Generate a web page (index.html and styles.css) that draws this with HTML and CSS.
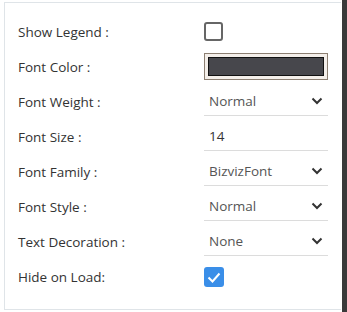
FILE: index.html
```html
<!DOCTYPE html>
<html lang="en">

<head>
    <meta charset="UTF-8">
    <meta name="viewport" content="width=device-width, initial-scale=1.0">
    <title>Legend Properties</title>
    <link rel="stylesheet" href="styles.css">
</head>

<body>
    <div class="page">
        <div class="panel">
            <div class="row">
                <span class="label">Show Legend :</span>
                <span class="checkbox"></span>
            </div>
            <div class="row">
                <span class="label">Font Color :</span>
                <span class="color-box"><span class="swatch"></span></span>
            </div>
            <div class="row">
                <span class="label">Font Weight :</span>
                <div class="select"><span>Normal</span><svg class="chevron" width="12" height="8" viewBox="0 0 12 8"><path d="M1.5 1.5 6 6l4.5-4.5" fill="none" stroke="#333" stroke-width="2"/></svg></div>
            </div>
            <div class="row">
                <span class="label">Font Size :</span>
                <div class="select input">14</div>
            </div>
            <div class="row">
                <span class="label">Font Family :</span>
                <div class="select"><span>BizvizFont</span><svg class="chevron" width="12" height="8" viewBox="0 0 12 8"><path d="M1.5 1.5 6 6l4.5-4.5" fill="none" stroke="#333" stroke-width="2"/></svg></div>
            </div>
            <div class="row">
                <span class="label">Font Style :</span>
                <div class="select"><span>Normal</span><svg class="chevron" width="12" height="8" viewBox="0 0 12 8"><path d="M1.5 1.5 6 6l4.5-4.5" fill="none" stroke="#333" stroke-width="2"/></svg></div>
            </div>
            <div class="row">
                <span class="label">Text Decoration :</span>
                <div class="select"><span>None</span><svg class="chevron" width="12" height="8" viewBox="0 0 12 8"><path d="M1.5 1.5 6 6l4.5-4.5" fill="none" stroke="#333" stroke-width="2"/></svg></div>
            </div>
            <div class="row">
                <span class="label">Hide on Load:</span>
                <span class="checkbox checked"><svg width="20" height="20" viewBox="0 0 20 20"><path d="M4.5 10.5 8.5 14.5 15.5 6.5" fill="none" stroke="#fff" stroke-width="2"/></svg></span>
            </div>
        </div>
        <div class="scroll-edge"></div>
    </div>
</body>

</html>
```

FILE: styles.css
```css
body {
    margin: 0;
    font-family: "Open Sans", Arial, sans-serif;
    font-size: 13.5px;
    color: #333;
    background: #ffffff;
}

.page {
    display: flex;
    height: 312px;
}

.panel {
    flex: 1;
    margin: 2px 1px 0 4px;
    height: 308px;
    padding: 11px 0 0 13px;
    box-sizing: border-box;
    border: 1px solid #dfe4e8;
    border-right: none;
}

.scroll-edge {
    width: 5px;
    background: #3a3a3a;
}

.row {
    display: grid;
    grid-template-columns: 186px 124px;
    align-items: center;
    height: 35px;
}

.label {
    color: #333;
}

.checkbox {
    display: block;
    width: 19px;
    height: 19px;
    box-sizing: border-box;
    border: 2px solid #666;
    border-radius: 3px;
}

.checkbox.checked {
    width: 20px;
    height: 20px;
    border: none;
    background: #3a8ee8;
}

.checkbox svg {
    display: block;
}

.color-box {
    display: block;
    height: 27px;
    padding: 3px;
    box-sizing: border-box;
    border: 1px solid #8c7f72;
    background: #f4efea;
}

.swatch {
    display: block;
    height: 100%;
    box-sizing: border-box;
    border: 1px solid #111;
    background: #47474c;
}

.select {
    display: flex;
    align-items: center;
    justify-content: space-between;
    height: 28px;
    padding: 0 5px;
    box-sizing: border-box;
    border-bottom: 1px solid #dcdcdc;
    color: #555;
}

.select.input {
    color: #333;
}

.chevron {
    display: block;
}
```
